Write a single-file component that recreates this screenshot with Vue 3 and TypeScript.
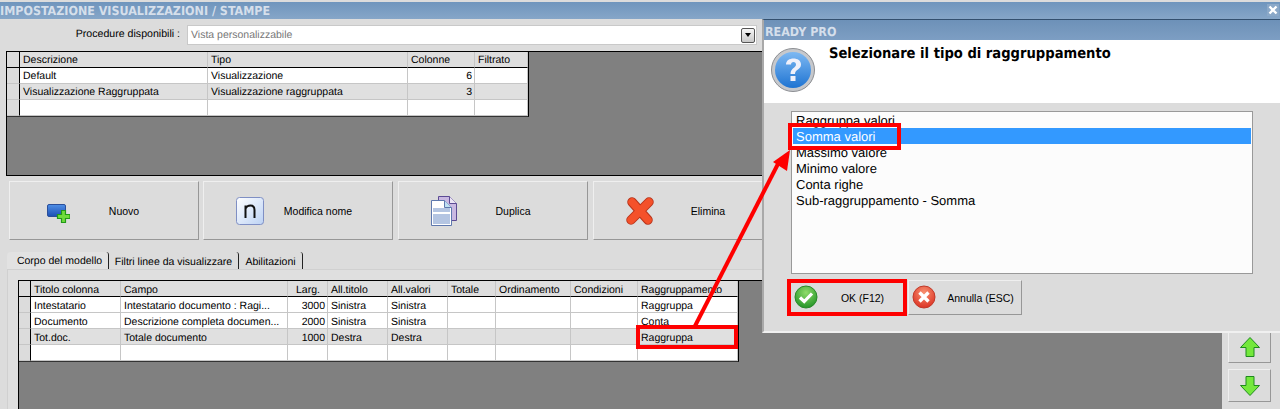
<script setup lang="ts">
interface Column {
  title: string;
  width: number;
  right?: boolean;
  centerHead?: boolean;
}

const procColumns: Column[] = [
  { title: 'Descrizione', width: 188 },
  { title: 'Tipo', width: 200 },
  { title: 'Colonne', width: 67, right: true },
  { title: 'Filtrato', width: 53 }
];

const procRows = [
  { cells: ['Default', 'Visualizzazione', '6', ''], shaded: false },
  { cells: ['Visualizzazione Raggruppata', 'Visualizzazione raggruppata', '3', ''], shaded: true },
  { cells: ['', '', '', ''], shaded: false }
];

const modelColumns: Column[] = [
  { title: 'Titolo colonna', width: 90 },
  { title: 'Campo', width: 167 },
  { title: 'Larg.', width: 40, right: true, centerHead: true },
  { title: 'All.titolo', width: 60 },
  { title: 'All.valori', width: 60 },
  { title: 'Totale', width: 48 },
  { title: 'Ordinamento', width: 75 },
  { title: 'Condizioni', width: 67 },
  { title: 'Raggruppamento', width: 100 }
];

const modelRows = [
  { cells: ['Intestatario', 'Intestatario documento : Ragi...', '3000', 'Sinistra', 'Sinistra', '', '', '', 'Raggruppa'], shaded: false },
  { cells: ['Documento', 'Descrizione completa documen...', '2000', 'Sinistra', 'Sinistra', '', '', '', 'Conta'], shaded: false },
  { cells: ['Tot.doc.', 'Totale documento', '1000', 'Destra', 'Destra', '', '', '', 'Raggruppa'], shaded: true },
  { cells: ['', '', '', '', '', '', '', '', ''], shaded: false }
];

const tabs = ['Corpo del modello', 'Filtri linee da visualizzare', 'Abilitazioni'];

const groupTypes = [
  'Raggruppa valori',
  'Somma valori',
  'Massimo valore',
  'Minimo valore',
  'Conta righe',
  'Sub-raggruppamento - Somma'
];
</script>

<template>
  <div class="screen">
    <div class="window">
      <div class="titlebar">
        <span>IMPOSTAZIONE VISUALIZZAZIONI / STAMPE</span>
        <span class="close">
          <svg width="10" height="10" viewBox="0 0 10 10"><path d="M1.5 1.5l7 7M8.5 1.5l-7 7" stroke="#fff" stroke-width="2.4" /></svg>
        </span>
      </div>

      <div class="combo-row">
        <label class="combo-label">Procedure disponibili :</label>
        <div class="combo">
          <span>Vista personalizzabile</span>
          <span class="combo-btn"><i></i></span>
        </div>
      </div>

      <div class="grid-area top-area">
        <table class="grid">
          <colgroup>
            <col style="width: 13px" />
            <col v-for="c in procColumns" :key="c.title" :style="{ width: c.width + 'px' }" />
          </colgroup>
          <thead>
            <tr>
              <th class="gutter"></th>
              <th v-for="c in procColumns" :key="c.title">{{ c.title }}</th>
            </tr>
          </thead>
          <tbody>
            <tr v-for="(r, i) in procRows" :key="i" :class="{ shaded: r.shaded }">
              <td class="gutter"></td>
              <td v-for="(v, j) in r.cells" :key="j" :class="{ num: procColumns[j].right }">{{ v }}</td>
            </tr>
          </tbody>
        </table>
      </div>

      <div class="actions">
        <button class="action">
          <span class="action-icon">
            <svg width="28" height="28" viewBox="0 0 28 28">
              <defs>
                <linearGradient id="blueBox" x1="0" y1="0" x2="0" y2="1">
                  <stop offset="0" stop-color="#4f8fe6" />
                  <stop offset="1" stop-color="#1c4fb4" />
                </linearGradient>
              </defs>
              <rect x="5.500" y="7.500" width="18" height="12" rx="1.500" fill="url(#blueBox)" stroke="#2b4f9a" />
              <path d="M15.500 17.500h4v-4h4v4h4.500v4h-4.500v4h-4v-4h-4z" fill="#6fdc3c" stroke="#229a18" stroke-width="1.200" />
            </svg>
          </span>
          <span class="action-label">Nuovo</span>
        </button>
        <button class="action">
          <span class="action-icon">
            <svg width="28" height="28" viewBox="0 0 28 28">
              <defs>
                <linearGradient id="nBox" x1="0" y1="0" x2="1" y2="1">
                  <stop offset="0" stop-color="#ffffff" />
                  <stop offset="1" stop-color="#bcd2f4" />
                </linearGradient>
              </defs>
              <rect x="0.500" y="0.500" width="27" height="27" rx="3" fill="url(#nBox)" stroke="#7f8fc4" />
              <path d="M9.500 21V8.500M9.500 11.500c1-2.200 3-3 5-3 2.500 0 4 1.500 4 4.500V21" fill="none" stroke="#111" stroke-width="2" />
            </svg>
          </span>
          <span class="action-label">Modifica nome</span>
        </button>
        <button class="action">
          <span class="action-icon">
            <svg width="28" height="30" viewBox="0 0 28 30">
              <path d="M7.500 0.500h11l7 7v17h-18z" fill="#c9b8e2" stroke="#5c4b94" />
              <path d="M18.500 0.500v7h7" fill="#ece6f6" stroke="#5c4b94" />
              <path d="M0.500 4.500h13l7 7v18h-20z" fill="#fff" stroke="#5e78ae" />
              <path d="M13.500 4.500v7h7" fill="#bfe0f2" stroke="#5e78ae" />
              <rect x="2" y="12" width="17" height="4" fill="#b4c5e2" />
              <rect x="2" y="18" width="17" height="10" fill="#b4c5e2" />
            </svg>
          </span>
          <span class="action-label">Duplica</span>
        </button>
        <button class="action">
          <span class="action-icon">
            <svg width="28" height="28" viewBox="0 0 28 28">
              <path d="M6 5L22 23M23 5L5 23" fill="none" stroke="#b8331a" stroke-width="9.500" stroke-linecap="round" />
              <path d="M6 5L22 23M23 5L5 23" fill="none" stroke="#f4512a" stroke-width="7.500" stroke-linecap="round" />
            </svg>
          </span>
          <span class="action-label">Elimina</span>
        </button>
      </div>

      <div class="tabs">
        <span v-for="(t, i) in tabs" :key="t" class="tab" :class="{ active: i === 0 }">{{ t }}</span>
      </div>

      <div class="lower">
        <div class="tab-panel">
          <div class="grid-area bottom-area">
            <table class="grid">
              <colgroup>
                <col style="width: 12px" />
                <col v-for="c in modelColumns" :key="c.title" :style="{ width: c.width + 'px' }" />
              </colgroup>
              <thead>
                <tr>
                  <th class="gutter"></th>
                  <th v-for="c in modelColumns" :key="c.title" :class="{ center: c.centerHead }">{{ c.title }}</th>
                </tr>
              </thead>
              <tbody>
                <tr v-for="(r, i) in modelRows" :key="i" :class="{ shaded: r.shaded }">
                  <td class="gutter"></td>
                  <td v-for="(v, j) in r.cells" :key="j" :class="{ num: modelColumns[j].right }">{{ v }}</td>
                </tr>
              </tbody>
            </table>
          </div>
        </div>
        <div class="side">
          <button class="side-btn">
            <svg width="20" height="20" viewBox="0 0 20 20">
              <path d="M10 0.500L19.500 10.500H14V19.500H6V10.500H0.500z" fill="#74e83c" stroke="#1f8a1f" />
            </svg>
          </button>
          <button class="side-btn">
            <svg width="20" height="20" viewBox="0 0 20 20">
              <path d="M10 19.500L19.500 9.500H14V0.500H6V9.500H0.500z" fill="#74e83c" stroke="#1f8a1f" />
            </svg>
          </button>
        </div>
      </div>
    </div>

    <div class="dialog">
      <div class="dialog-title">READY PRO</div>
      <div class="dialog-head">
        <svg class="help" width="44" height="44" viewBox="0 0 44 44">
          <defs>
            <linearGradient id="helpBlue" x1="0" y1="0" x2="0" y2="1">
              <stop offset="0" stop-color="#7db8f2" />
              <stop offset="1" stop-color="#1f74d2" />
            </linearGradient>
          </defs>
          <circle cx="22" cy="22" r="21.500" fill="#c6c8cc" stroke="#8c8e92" />
          <circle cx="22" cy="22" r="18" fill="url(#helpBlue)" />
          <path d="M15 16.500c0-4 3.500-6 7.500-6s7.500 2 7.500 6c0 5-6 5-6 9.500h-4.500c0-6 5.500-6 5.500-9.500 0-1.500-1-2.500-2.500-2.500s-2.500 1-2.500 2.500z" fill="#f0f0fa" />
          <rect x="19.500" y="28" width="5" height="5" fill="#f0f0fa" />
        </svg>
        <h2>Selezionare il tipo di raggruppamento</h2>
      </div>
      <div class="dialog-body">
        <ul class="listbox">
          <li v-for="(g, i) in groupTypes" :key="g" :class="{ selected: i === 1 }">{{ g }}</li>
        </ul>
        <div class="dialog-buttons">
          <button class="dlg-btn">
            <svg width="24" height="24" viewBox="0 0 24 24">
              <defs>
                <radialGradient id="okGreen" cx="0.5" cy="0.3" r="0.8">
                  <stop offset="0" stop-color="#8fdc6a" />
                  <stop offset="1" stop-color="#148a1e" />
                </radialGradient>
              </defs>
              <circle cx="12" cy="12" r="11" fill="url(#okGreen)" stroke="#2a8a2a" />
              <path d="M6 12.500l4.200 4L18 8.500" fill="none" stroke="#fff" stroke-width="3.200" />
            </svg>
            <span>OK (F12)</span>
          </button>
          <button class="dlg-btn">
            <svg width="24" height="24" viewBox="0 0 24 24">
              <defs>
                <radialGradient id="noRed" cx="0.5" cy="0.3" r="0.8">
                  <stop offset="0" stop-color="#f89070" />
                  <stop offset="1" stop-color="#d8261a" />
                </radialGradient>
              </defs>
              <circle cx="12" cy="12" r="11" fill="url(#noRed)" stroke="#c03a2a" />
              <path d="M7.500 7.500l9 9M16.500 7.500l-9 9" fill="none" stroke="#fff" stroke-width="3.400" />
            </svg>
            <span>Annulla (ESC)</span>
          </button>
        </div>
      </div>
    </div>

    <!-- annotazioni rosse sopra lo screenshot -->
    <div class="mark mark-cell"></div>
    <div class="mark mark-item"></div>
    <div class="mark mark-ok"></div>
    <svg class="arrow" width="1280" height="409" viewBox="0 0 1280 409">
      <path d="M695 326L780 160" stroke="#fe0000" stroke-width="4" />
      <path d="M790 150L787 171L773 162z" fill="#fe0000" />
    </svg>
  </div>
</template>

<style>
html,
body {
  margin: 0;
  background: #808080;
}
</style>

<style scoped>
.screen {
  position: relative;
  width: 1280px;
  height: 409px;
  overflow: hidden;
  font-family: "Liberation Sans", Arial, sans-serif;
  font-size: 10.500px;
  text-rendering: geometricPrecision;
  color: #000;
}

.window {
  display: flex;
  flex-direction: column;
  height: 409px;
  box-sizing: border-box;
  padding-top: 2px;
  background: #dcdcdc;
}

.titlebar {
  display: flex;
  align-items: center;
  justify-content: space-between;
  flex: 0 0 17px;
  box-sizing: border-box;
  padding: 0 1px 1px 0;
  background: linear-gradient(#6f95bd, #86a6c8);
  color: #d5dfeb;
  font-family: "DejaVu Sans Condensed", "DejaVu Sans", sans-serif;
  font-size: 12.400px;
  font-weight: bold;
}

.close {
  display: flex;
  align-items: center;
  justify-content: center;
  width: 12px;
  height: 12px;
  background: #8aa8c8;
}

.combo-row {
  display: flex;
  flex: 0 0 32px;
  box-sizing: border-box;
  padding-top: 6px;
}

.combo-label {
  width: 180px;
  line-height: 19px;
  text-align: right;
  font-size: 10.600px;
}

.combo {
  display: flex;
  align-items: center;
  justify-content: space-between;
  box-sizing: border-box;
  width: 570px;
  height: 20px;
  margin-left: 7px;
  padding-left: 3px;
  background: #fff;
  border: 1px solid #c9c9c9;
  color: #777;
}

.combo-btn {
  display: flex;
  align-items: center;
  justify-content: center;
  box-sizing: border-box;
  width: 14px;
  height: 15px;
  margin-right: 1px;
  background: linear-gradient(#f6f6f6, #c8c8c8);
  border: 1px solid #555;
  border-radius: 2px;
}

.combo-btn i {
  border-left: 3px solid transparent;
  border-right: 3px solid transparent;
  border-top: 4px solid #000;
}

.grid-area {
  box-sizing: border-box;
  background: #808080;
  border-top: 1px solid #000;
  border-left: 1px solid #000;
}

.top-area {
  flex: 0 0 125px;
  margin: 0 8px 0 6px;
  border-bottom: 1px solid #000;
}

.grid {
  border-collapse: separate;
  border-spacing: 0;
  table-layout: fixed;
  width: min-content;
  background: #fff;
  border-right: 1px solid #000;
  border-bottom: 1px solid #333;
}

.grid th,
.grid td {
  box-sizing: border-box;
  height: 16px;
  padding: 0 2px 0 3px;
  font-weight: normal;
  text-align: left;
  white-space: nowrap;
  overflow: hidden;
  border-right: 1px solid #c6c6c6;
  border-bottom: 1px solid #c6c6c6;
}

.bottom-area .grid th,
.bottom-area .grid td {
  padding-top: 2px;
}

.grid th {
  background: #dedede;
  border-bottom-color: #000;
}

.grid th.center {
  text-align: center;
}

.grid tr.shaded td {
  background: #e0e0e0;
}

.grid td.num {
  text-align: right;
}

.grid .gutter,
.grid tr.shaded td.gutter {
  background: #dcdcdc;
  border-right-color: #000;
}

.actions {
  display: flex;
  gap: 4px;
  flex: 0 0 59px;
  margin-top: 5px;
  padding-left: 9px;
  overflow: hidden;
}

.action {
  display: flex;
  align-items: center;
  flex: 0 0 190px;
  box-sizing: border-box;
  padding: 0 0 0 32px;
  background: #dcdcdc;
  border: 1px solid;
  border-color: #efefef #979797 #979797 #efefef;
  font: inherit;
  color: inherit;
}

.action + .action + .action {
  margin-left: 1px;
}

.action-icon {
  display: flex;
  align-items: center;
  justify-content: center;
  flex: 0 0 28px;
  height: 30px;
}

.action-label {
  flex: 0 0 100px;
  margin-left: 4px;
  text-align: center;
}

.tabs {
  display: flex;
  flex: 0 0 17px;
  margin-top: 12px;
  padding-left: 7px;
  align-items: stretch;
}

.tab {
  display: flex;
  align-items: center;
  justify-content: center;
  box-sizing: border-box;
  padding-top: 2px;
  border-right: 1px solid #222;
  border-top-right-radius: 3px;
}

.tab:nth-child(1) {
  width: 102px;
}

.tab:nth-child(2) {
  width: 130px;
}

.tab:nth-child(3) {
  width: 64px;
}

.tab.active {
  padding: 0 0 0 4px;
  background: #e2e2e2;
  border-top-left-radius: 4px;
}

.lower {
  display: flex;
  flex: 1;
  min-height: 0;
}

.tab-panel {
  flex: 0 0 1215px;
  box-sizing: border-box;
  margin-left: 7px;
  padding: 10px 0 0 10px;
  background: #dfdfdf;
  border-top: 1px solid #d0d0d0;
  border-left: 1px solid #d0d0d0;
}

.bottom-area {
  height: 100%;
  border-bottom: 0;
}

.side {
  display: flex;
  flex-direction: column;
  gap: 6px;
  margin: 61px 0 0 6px;
}

.side-btn {
  display: flex;
  align-items: center;
  justify-content: center;
  box-sizing: border-box;
  width: 43px;
  height: 33px;
  padding: 0;
  background: #dcdcdc;
  border: 1px solid;
  border-color: #efefef #979797 #979797 #efefef;
}

.dialog {
  position: absolute;
  left: 762px;
  top: 19px;
  display: flex;
  flex-direction: column;
  box-sizing: border-box;
  width: 518px;
  height: 314px;
  background: #dcdcdc;
  border-top: 1px solid #33506f;
  border-left: 2px solid #a9a9a9;
  border-bottom: 2px solid #f0f0f0;
}

.dialog-title {
  flex: 0 0 20px;
  padding-left: 1px;
  line-height: 23px;
  overflow: hidden;
  background: linear-gradient(#6d91b8, #7d9ec3);
  color: #d5dfeb;
  font-family: "DejaVu Sans Condensed", "DejaVu Sans", sans-serif;
  font-size: 12.400px;
  font-weight: bold;
}

.dialog-head {
  display: flex;
  flex: 0 0 63px;
  background: #fff;
}

.help {
  margin: 8px 0 0 7px;
}

.dialog-head h2 {
  margin: 4px 0 0 14px;
  font-family: "DejaVu Sans Condensed", "DejaVu Sans", sans-serif;
  font-size: 14.600px;
  line-height: 20px;
  font-weight: bold;
}

.dialog-body {
  flex: 1;
  padding: 8px 0 0 27px;
}

.listbox {
  box-sizing: border-box;
  width: 462px;
  height: 163px;
  margin: 0;
  padding: 0 1px;
  list-style: none;
  background: #fcfcfc;
  border: 1px solid #999;
}

.listbox li {
  height: 16px;
  padding-left: 3px;
  line-height: 18px;
  font-size: 13px;
}

.listbox li.selected {
  background: #3399ff;
  color: #fff;
}

.dialog-buttons {
  display: flex;
  gap: 4px;
  margin: 6px 0 0 -1px;
}

.dlg-btn {
  position: relative;
  display: flex;
  align-items: center;
  justify-content: center;
  box-sizing: border-box;
  width: 114px;
  height: 35px;
  padding: 0 0 0 31px;
  background: #dcdcdc;
  border: 1px solid;
  border-color: #efefef #979797 #979797 #efefef;
  font: inherit;
  color: inherit;
}

.dlg-btn svg {
  position: absolute;
  left: 3px;
  top: 4px;
}

.mark {
  position: absolute;
  box-sizing: border-box;
  border: 4px solid #fe0000;
}

.mark-cell {
  left: 636px;
  top: 325px;
  width: 102px;
  height: 24px;
}

.mark-item {
  left: 788px;
  top: 123px;
  width: 113px;
  height: 27px;
}

.mark-ok {
  left: 787px;
  top: 279px;
  width: 120px;
  height: 37px;
}

.arrow {
  position: absolute;
  left: 0;
  top: 0;
  pointer-events: none;
}
</style>
